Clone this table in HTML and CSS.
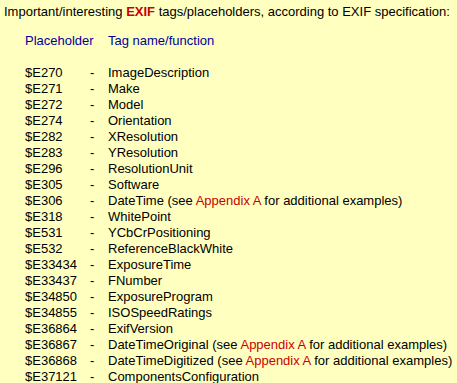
FILE: index.html
```html
<!DOCTYPE html>
<html>
<head>
<meta charset="utf-8">
<link rel="stylesheet" href="styles.css">
</head>
<body>
<p class="title">Important/interesting <b class="exif">EXIF</b> tags/placeholders, according to EXIF specification:</p>
<div class="tags">
  <div class="hd">Placeholder</div><div class="hd"></div><div class="hd">Tag name/function</div>
  <div class="sp"></div><div class="sp"></div><div class="sp"></div>
  <div>$E270</div><div>-</div><div>ImageDescription</div>
  <div>$E271</div><div>-</div><div>Make</div>
  <div>$E272</div><div>-</div><div>Model</div>
  <div>$E274</div><div>-</div><div>Orientation</div>
  <div>$E282</div><div>-</div><div>XResolution</div>
  <div>$E283</div><div>-</div><div>YResolution</div>
  <div>$E296</div><div>-</div><div>ResolutionUnit</div>
  <div>$E305</div><div>-</div><div>Software</div>
  <div>$E306</div><div>-</div><div>DateTime (see <span class="link">Appendix A</span> for additional examples)</div>
  <div>$E318</div><div>-</div><div>WhitePoint</div>
  <div>$E531</div><div>-</div><div>YCbCrPositioning</div>
  <div>$E532</div><div>-</div><div>ReferenceBlackWhite</div>
  <div>$E33434</div><div>-</div><div>ExposureTime</div>
  <div>$E33437</div><div>-</div><div>FNumber</div>
  <div>$E34850</div><div>-</div><div>ExposureProgram</div>
  <div>$E34855</div><div>-</div><div>ISOSpeedRatings</div>
  <div>$E36864</div><div>-</div><div>ExifVersion</div>
  <div>$E36867</div><div>-</div><div>DateTimeOriginal (see <span class="link">Appendix A</span> for additional examples)</div>
  <div>$E36868</div><div>-</div><div>DateTimeDigitized (see <span class="link">Appendix A</span> for additional examples)</div>
  <div>$E37121</div><div>-</div><div>ComponentsConfiguration</div>
</div>
</body>
</html>
```
FILE: styles.css
```css
html, body {
  margin: 0;
  background: #ffffc0;
}
body {
  padding: 4px 0 0 4px;
  font-family: "Liberation Sans", Arial, sans-serif;
  font-size: 13px;
  line-height: 16px;
  color: #000;
  overflow: hidden;
  white-space: nowrap;
}
.title {
  margin: 0 0 13px 0;
}
.exif {
  color: #cc0000;
  font-weight: bold;
}
.link {
  color: #cc0000;
}
.tags {
  display: grid;
  grid-template-columns: 65px 18px auto;
  padding-left: 21px;
}
.hd {
  color: #000099;
}
.sp {
  height: 16px;
}
```
